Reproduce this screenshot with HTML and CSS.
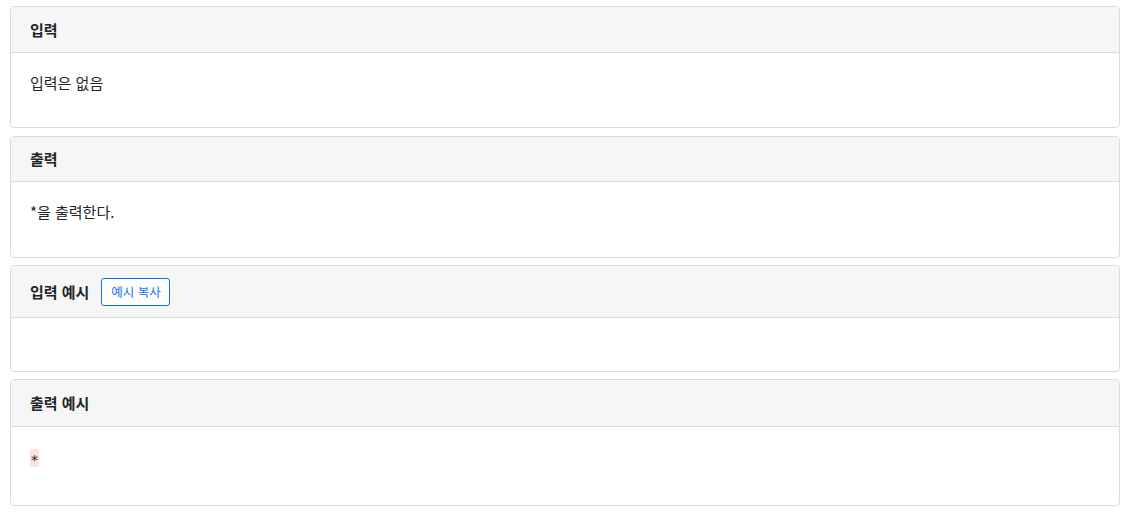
FILE: index.html
```html
<!DOCTYPE html>
<html lang="ko">
<head>
<meta charset="utf-8">
<link rel="stylesheet" href="styles.css">
</head>
<body>
<div class="wrap">
  <section class="card">
    <div class="card-head"><h3 class="title">입력</h3></div>
    <div class="card-body"><p class="text">입력은 없음</p></div>
  </section>
  <section class="card card-second">
    <div class="card-head"><h3 class="title">출력</h3></div>
    <div class="card-body"><p class="text">*을 출력한다.</p></div>
  </section>
  <section class="card">
    <div class="card-head head-btn"><h3 class="title">입력 예시</h3><button class="copy">예시 복사</button></div>
    <div class="card-body body-empty"><pre class="sample"></pre></div>
  </section>
  <section class="card">
    <div class="card-head head-out"><h3 class="title">출력 예시</h3></div>
    <div class="card-body body-out"><pre class="sample"><span class="mark">*</span></pre></div>
  </section>
</div>
</body>
</html>
```
FILE: styles.css
```css
html, body {
  margin: 0;
  padding: 0;
  background: #fff;
}
body {
  font-family: "Noto Sans CJK KR", "Noto Sans", sans-serif;
  font-size: 15px;
  color: #212529;
}
.wrap {
  padding: 6px 10px;
  display: flex;
  flex-direction: column;
  gap: 7px;
}
.card {
  border: 1px solid #dcdcdc;
  border-radius: 4px;
  overflow: hidden;
}
.card:first-child { margin-bottom: 1px; }
.card-head {
  background: #f6f6f6;
  border-bottom: 1px solid #dcdcdc;
  height: 46px;
  padding: 0 19px;
  display: flex;
  align-items: center;
  box-sizing: border-box;
}
.card-second .card-head { height: 45px; }
.card-second .card-body { height: 75px; }
.head-btn { height: 52px; gap: 12px; }
.head-out { height: 47px; }
.title {
  margin: 0;
  font-size: 15px;
  font-weight: 700;
  line-height: 20px;
  color: #212529;
}
.copy {
  font-family: "Noto Sans CJK KR", "Noto Sans", sans-serif;
  font-size: 12.5px;
  color: #1a73f0;
  background: #fff;
  border: 1px solid #0d6efd;
  border-radius: 3px;
  height: 28px;
  width: 69px;
  padding: 0;
  line-height: 26px;
}
.card-body {
  padding: 19px 19px 0;
  height: 74px;
  box-sizing: border-box;
}
.text {
  margin: 0;
  line-height: 21px;
}
.body-empty { height: 53px; }
.body-out { height: 78px; padding-top: 22px; }
.sample {
  margin: 0;
  font-family: "DejaVu Sans Mono", "Liberation Mono", monospace;
  font-size: 14px;
  line-height: 18px;
}
.mark {
  display: inline-block;
  background: #fde2e2;
  width: 9px;
  height: 18px;
  line-height: 22px;
  text-align: center;
  vertical-align: top;
}
```
